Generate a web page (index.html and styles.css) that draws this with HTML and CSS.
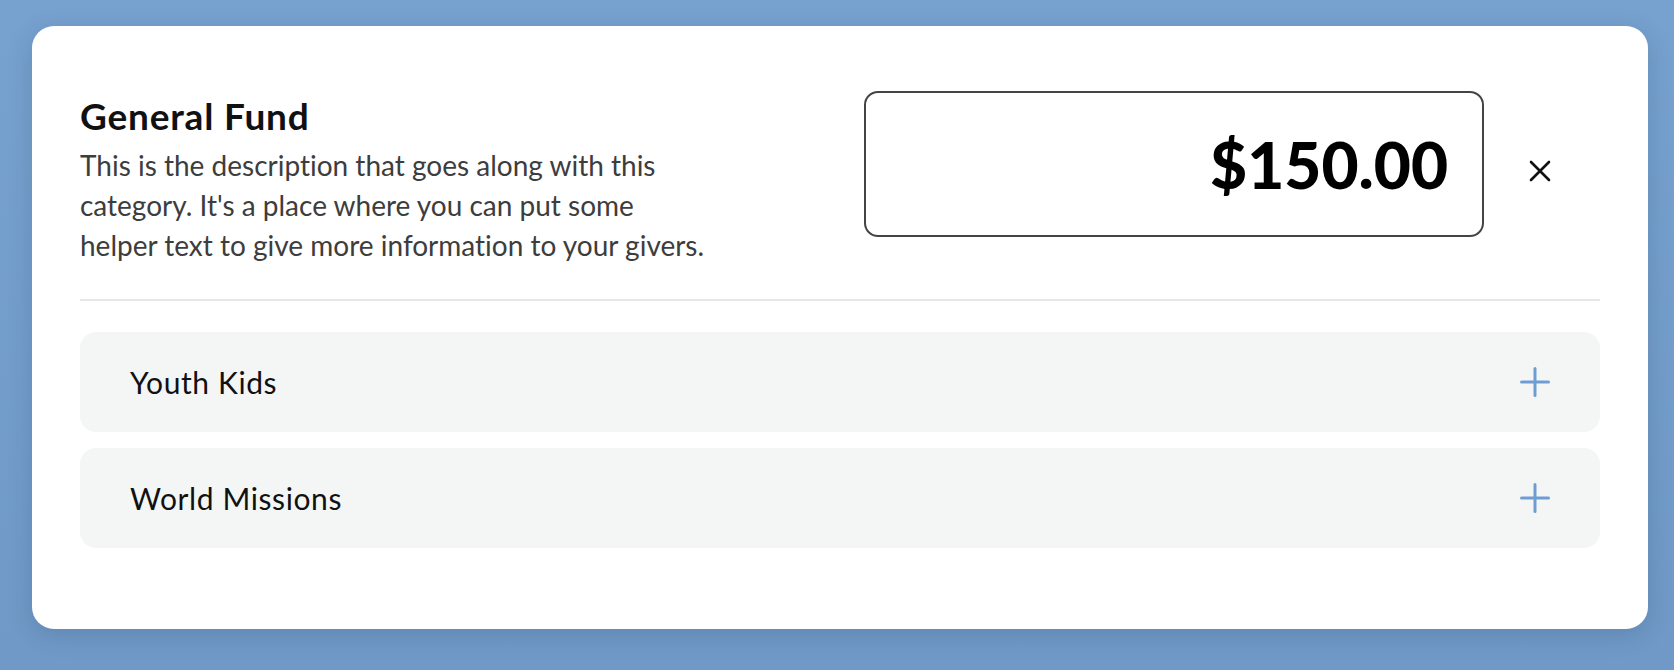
FILE: index.html
```html
<!DOCTYPE html>
<html lang="en">
<head>
  <meta charset="UTF-8" />
  <meta name="viewport" content="width=device-width, initial-scale=1.0"/>
  <title>Give</title>
  <link rel="stylesheet" href="styles.css">
</head>
<body>
  <div class="card">
    <div class="fund-header">
      <div class="fund-info">
        <h1>General Fund</h1>
        <p>This is the description that goes along with this category. It's a place where you can put some<br>helper text to give more information to your givers.</p>
      </div>
      <div class="amount-row">
        <div class="amount-box">$150.00</div>
        <button class="remove-btn" aria-label="Remove">
          <svg width="24" height="24" viewBox="0 0 24 24">
            <path d="M3 3L21 21M21 3L3 21" stroke="#111" stroke-width="2.6" stroke-linecap="round" fill="none"/>
          </svg>
        </button>
      </div>
    </div>

    <div class="fund-list">
      <div class="fund-option">
        <span>Youth Kids</span>
        <svg class="plus" width="30" height="30" viewBox="0 0 30 30">
          <path d="M15 1.5V28.5M1.5 15H28.5" stroke="currentColor" stroke-width="3" stroke-linecap="round" fill="none"/>
        </svg>
      </div>
      <div class="fund-option">
        <span>World Missions</span>
        <svg class="plus" width="30" height="30" viewBox="0 0 30 30">
          <path d="M15 1.5V28.5M1.5 15H28.5" stroke="currentColor" stroke-width="3" stroke-linecap="round" fill="none"/>
        </svg>
      </div>
    </div>
  </div>
</body>
</html>
```

FILE: styles.css
```css
body {
  font-family: Lato, 'Liberation Sans', sans-serif;
  font-variant-ligatures: no-common-ligatures;
  margin: 0;
  padding: 26px 26px 42px 32px;
  background: linear-gradient(180deg, #77a1cf 0%, #7099c7 100%);
  min-height: 670px;
  box-sizing: border-box;
}

.card {
  background: #fff;
  border-radius: 22px;
  padding: 65px 48px 81px 48px;
  box-shadow: 0 6px 24px rgba(30, 50, 80, 0.18);
}

.fund-header {
  display: flex;
  align-items: flex-start;
  padding-bottom: 34px;
  border-bottom: 2px solid #e6e6e6;
}

.fund-info {
  flex: 1;
}

.fund-info h1 {
  margin: 4px 0 0 0;
  font-size: 37px;
  line-height: 42px;
  font-weight: 700;
  letter-spacing: 0.8px;
  color: #111;
}

.fund-info p {
  margin: 8px 0 0 0;
  max-width: 660px;
  font-size: 28px;
  line-height: 40px;
  color: #3d3d3d;
}

.amount-row {
  display: flex;
  align-items: center;
  margin-right: 48px;
}

.amount-box {
  width: 620px;
  height: 146px;
  box-sizing: border-box;
  border: 2px solid #444;
  border-radius: 14px;
  display: flex;
  align-items: center;
  justify-content: flex-end;
  padding-right: 34px;
  font-size: 64px;
  font-weight: 900;
  color: #000;
}

.remove-btn {
  margin-left: 44px;
  padding: 14px 0 0 0;
  background: none;
  border: none;
  cursor: pointer;
  display: flex;
}

.fund-list {
  display: flex;
  flex-direction: column;
  gap: 16px;
  margin-top: 31px;
}

.fund-option {
  display: flex;
  justify-content: space-between;
  align-items: center;
  height: 100px;
  padding: 0 50px 0 50px;
  background: #f4f6f6;
  border-radius: 16px;
  font-size: 30px;
  letter-spacing: 0.6px;
  color: #111;
}

.plus {
  color: #6e9dd4;
}
```
